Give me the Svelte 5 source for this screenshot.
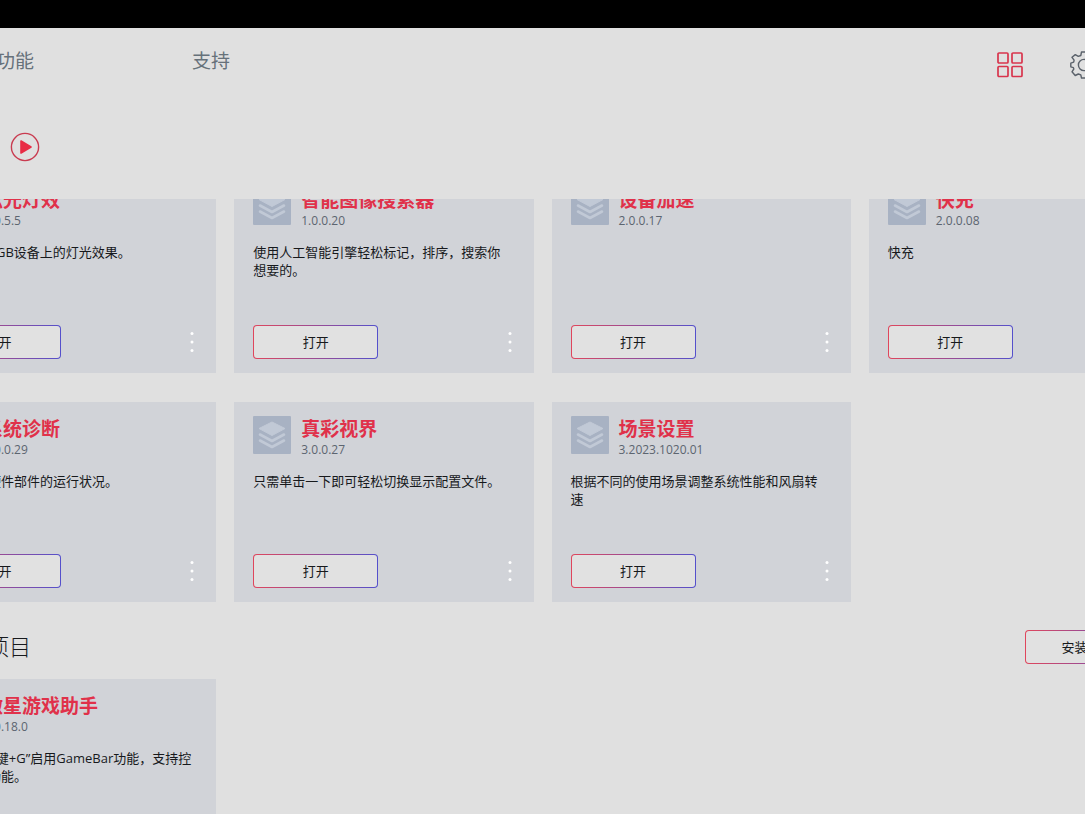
<script lang="ts">
	interface Feature {
		name: string;
		version: string;
		description: string;
	}

	const installed: Feature[] = [
		{ name: '炫光灯效', version: '3.0.5.5', description: '调整您的RGB设备上的灯光效果。' },
		{ name: '智能图像搜索器', version: '1.0.0.20', description: '使用人工智能引擎轻松标记，排序，搜索你想要的。' },
		{ name: '设备加速', version: '2.0.0.17', description: '' },
		{ name: '快充', version: '2.0.0.08', description: '快充' },
		{ name: '系统诊断', version: '1.0.0.29', description: '监控系统硬件部件的运行状况。' },
		{ name: '真彩视界', version: '3.0.0.27', description: '只需单击一下即可轻松切换显示配置文件。' },
		{ name: '场景设置', version: '3.2023.1020.01', description: '根据不同的使用场景调整系统性能和风扇转速' }
	];

	const available: Feature[] = [
		{ name: '微星游戏助手', version: '1.0.18.0', description: '“Windows键+G”启用GameBar功能，支持控制中心等功能。' }
	];
</script>

{#snippet card(feature: Feature)}
	<article class="card">
		<div class="card-head">
			<svg class="card-icon" viewBox="0 0 38 38" aria-hidden="true">
				<rect width="38" height="38" rx="1" fill="#a8b2c3" />
				<path d="M19 6 L32 12.5 L19 19.5 L6 12.5 Z" fill="#c1c9d6" stroke="#c1c9d6" stroke-linejoin="round" />
				<path d="M7 18.5 L19 25 L31 18.5 M7 24.5 L19 31 L31 24.5" fill="none" stroke="#c1c9d6" stroke-width="2.6" stroke-linecap="round" stroke-linejoin="round" />
			</svg>
			<div>
				<h3>{feature.name}</h3>
				<p class="version">{feature.version}</p>
			</div>
		</div>
		<p class="description">{feature.description}</p>
		<div class="card-foot">
			<button class="outline-btn">打开</button>
			<button class="more-btn" aria-label="更多">
				<svg width="4" height="22" viewBox="0 0 4 22" fill="#fff">
					<circle cx="2" cy="2.5" r="1.5" />
					<circle cx="2" cy="11" r="1.5" />
					<circle cx="2" cy="19.5" r="1.5" />
				</svg>
			</button>
		</div>
	</article>
{/snippet}

<div class="page">
	<div class="titlebar"></div>
	<div class="window">
		<header>
			<nav>
				<a href="#features">功能</a>
				<a href="#support">支持</a>
			</nav>
			<div class="tools">
				<button class="icon-btn" aria-label="应用">
					<svg width="26" height="26" viewBox="0 0 26 26" fill="none" stroke="#d8344c" stroke-width="1.7">
						<rect x="1" y="1" width="10" height="10" rx="1" />
						<rect x="15" y="1" width="10" height="10" rx="1" />
						<rect x="1" y="14.5" width="10" height="10" rx="1" />
						<rect x="15" y="14.5" width="10" height="10" rx="1" />
					</svg>
				</button>
				<button class="icon-btn" aria-label="设置">
					<svg width="28" height="28" viewBox="0 0 28 28" fill="none" stroke="#5b626b" stroke-width="1.4" stroke-linejoin="round">
						<path d="M11.5 1 H16.5 L17.2 4.6 L19.8 5.7 L22.8 3.6 L26 7.4 L23.8 10.4 L24.1 12 L27.3 13 V17 L24 17.8 L23.4 19.5 L25.3 22.6 L22 25.3 L19.3 23.5 L17 24.3 L16.5 27 H11.5 L10.8 23.9 L8.3 23 L5.2 24.5 L2 20.8 L3.8 18 L3.4 16.6 L0.8 15.8 V12.2 L3.7 11.2 L4.1 9.2 L2 6.3 L5.3 3.6 L8.3 5.4 L10.8 4.5 Z" />
						<circle cx="14" cy="14" r="5.6" />
					</svg>
				</button>
			</div>
		</header>

		<div class="tutorial">
			<button class="icon-btn" aria-label="播放教程">
				<svg width="30" height="30" viewBox="0 0 30 30">
					<circle cx="15" cy="15" r="13.6" fill="none" stroke="#c93b50" stroke-width="1.4" />
					<path d="M11 9 L21 15 L11 21 Z" fill="#e82c45" stroke="#e82c45" stroke-width="1.6" stroke-linejoin="round" />
				</svg>
			</button>
		</div>

		<main>
			<section class="grid scrolled">
				{#each installed as feature}
					{@render card(feature)}
				{/each}
			</section>

			<div class="section-head">
				<h2>可安装项目</h2>
				<button class="outline-btn">安装全部</button>
			</div>

			<section class="grid">
				{#each available as feature}
					{@render card(feature)}
				{/each}
			</section>
		</main>
	</div>
</div>

<style>
	:global(body) {
		background: #e0e0e0;
	}

	.page {
		display: flex;
		flex-direction: column;
		height: 100vh;
		overflow: hidden;
		color: #17191c;
		font-family: 'Open Sans', 'Noto Sans CJK SC', sans-serif;
		font-size: 13px;
		line-height: 18px;
	}

	.titlebar {
		flex: none;
		height: 28px;
		background: #000;
	}

	/* The app window is wider than the screen on both sides */
	.window {
		flex: 1;
		min-height: 0;
		display: flex;
		flex-direction: column;
		margin: 0 -83px;
	}

	header {
		display: flex;
		justify-content: space-between;
		align-items: center;
		height: 74px;
		padding: 0 70px 0 79px;
	}

	nav {
		display: flex;
		gap: 158px;
		padding-bottom: 8px;
	}

	nav a {
		color: #66717a;
		font-size: 19px;
		line-height: 28px;
		text-decoration: none;
	}

	.tools {
		display: flex;
		align-items: center;
		gap: 47px;
	}

	button {
		margin: 0;
		font: inherit;
		color: inherit;
		cursor: pointer;
	}

	.icon-btn,
	.more-btn {
		display: flex;
		padding: 0;
		border: none;
		background: none;
	}

	.tutorial {
		padding: 30px 93px 37px;
	}

	main {
		flex: 1;
		min-height: 0;
		overflow: hidden;
	}

	.grid {
		display: grid;
		grid-template-columns: repeat(4, 1fr);
		gap: 29px 18px;
	}

	.scrolled {
		margin-top: -26px;
	}

	.card {
		display: flex;
		flex-direction: column;
		box-sizing: border-box;
		height: 200px;
		padding: 14px 22px 14px 19px;
		background: #d1d3d8;
	}

	.card-head {
		display: flex;
		gap: 10px;
	}

	.card-icon {
		width: 38px;
		height: 38px;
	}

	h2,
	h3,
	p {
		margin: 0;
	}

	h3 {
		color: #e0314a;
		font-size: 19px;
		font-weight: 600;
		line-height: 26px;
	}

	.version {
		color: #5c6570;
		font-size: 12px;
		line-height: 16px;
	}

	.description {
		flex: 1;
		margin-top: 14px;
	}

	.card-foot {
		display: flex;
		justify-content: space-between;
		align-items: center;
	}

	.outline-btn {
		width: 125px;
		height: 34px;
		padding: 0;
		border: 1px solid transparent;
		border-radius: 4px;
		background:
			linear-gradient(#e1e1e1, #e1e1e1) padding-box,
			linear-gradient(90deg, #e0465c, #5450cc) border-box;
	}

	.section-head {
		display: flex;
		justify-content: space-between;
		align-items: flex-start;
		padding: 28px 18px 15px 4px;
	}

	h2 {
		font-size: 22px;
		font-weight: 300;
		line-height: 32px;
	}
</style>
